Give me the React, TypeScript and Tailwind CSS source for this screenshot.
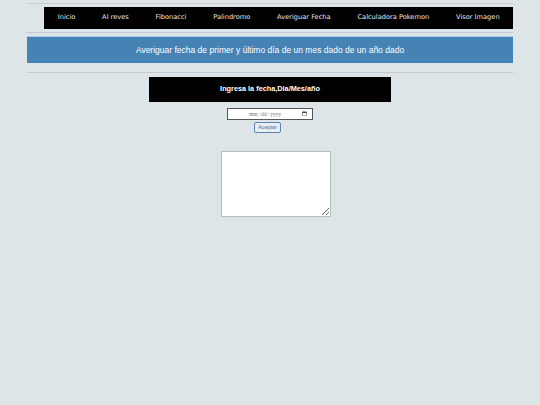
import React from "react";

const navItems = [
  "Inicio",
  "Al reves",
  "Fibonacci",
  "Palindromo",
  "Averiguar Fecha",
  "Calculadora Pokemon",
  "Visor Imagen",
];

export default function App() {
  return (
    <div className="min-h-[405px] w-[540px] bg-[#dee5e9] pt-[3px] antialiased">
      <div className="mx-[27px] w-[486px]">
        <div className="h-px bg-[#c4cacd]" />
        <div className="mt-[3px] ml-[17px] flex h-[22px] items-center justify-end whitespace-nowrap bg-black font-['DejaVu_Sans',sans-serif] text-[6.65px] text-[#e8e8e8]">
          {navItems.map((n) => (
            <span key={n} className="shrink-0 px-[13.4px]">
              {n}
            </span>
          ))}
        </div>
        <div className="mt-[3px] h-px bg-[#c4cacd]" />
        <div className="mt-[3px] flex h-[27px] items-center justify-center border-t border-[#a8c8e6] bg-[#4682b4] font-['Liberation_Sans',sans-serif] text-[8.5px] text-white">
          Averiguar fecha de primer y último día de un mes dado de un año dado
        </div>
        <div className="mt-[9px] h-px bg-[#c4cacd]" />
        <div className="mt-[4px] flex flex-col items-center">
          <div className="flex h-[25px] w-[242px] items-center justify-center bg-black font-['Liberation_Sans',sans-serif] text-[7.3px] font-bold text-white">
            Ingresa la fecha,Dia/Mes/año
          </div>
          <input
            type="date"
            className="mt-[6px] h-[12px] w-[86px] border border-[#555] bg-white pl-[20px] pr-[3px] font-['Liberation_Serif',serif] text-[5.5px] text-[#777]"
          />
          <button className="mt-[2px] mr-[5px] h-[11px] w-[27px] rounded-[2px] border border-[#5b86b0] bg-[#e9eef3] font-['Liberation_Sans',sans-serif] text-[5.5px] leading-none text-[#4a6f95]">
            Aceptar
          </button>
          <textarea className="mt-[18px] ml-[12px] h-[66px] w-[110px] border border-[#b9bdc0] bg-white" />
        </div>
      </div>
    </div>
  );
}
